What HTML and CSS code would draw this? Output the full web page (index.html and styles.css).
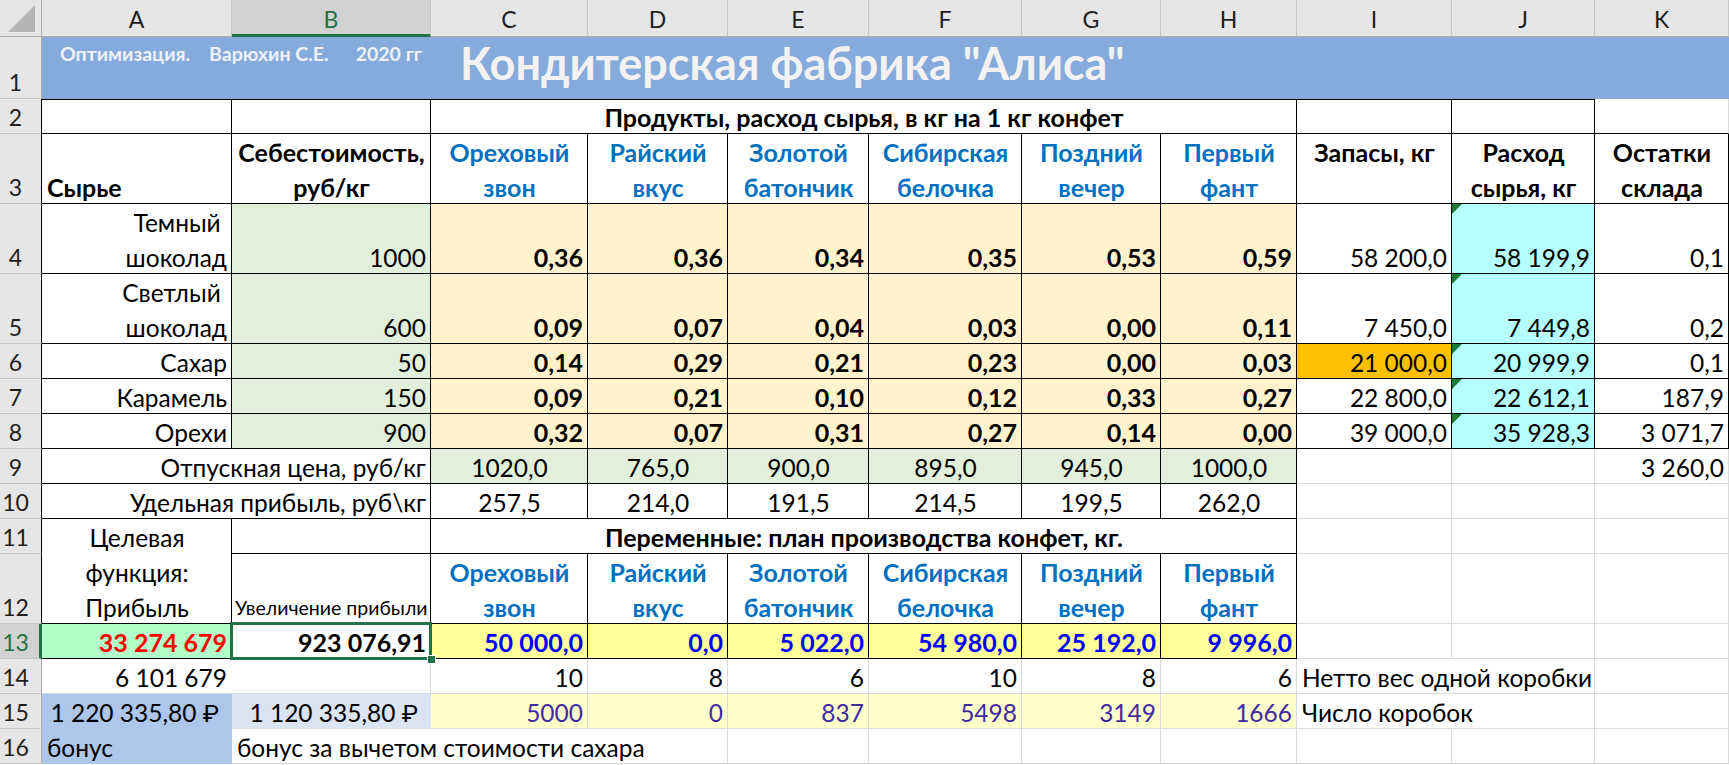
FILE: index.html
```html
<!DOCTYPE html>
<html lang="ru">
<head>
<meta charset="utf-8">
<title>Кондитерская фабрика "Алиса"</title>
<link rel="stylesheet" href="styles.css">
</head>
<body>
<div class="sheet">
  <!-- column headers -->
  <div class="corner"><svg width="28" height="28" viewBox="0 0 28 28"><polygon points="27,0 27,27 0,27" fill="#b4b4b4"/></svg></div>
  <div class="ch">A</div>
  <div class="ch sel">B</div>
  <div class="ch">C</div>
  <div class="ch">D</div>
  <div class="ch">E</div>
  <div class="ch">F</div>
  <div class="ch">G</div>
  <div class="ch">H</div>
  <div class="ch">I</div>
  <div class="ch">J</div>
  <div class="ch">K</div>

  <!-- row 1 -->
  <div class="rh">1</div>
  <div class="band">
    <div class="sub"><span>Оптимизация.</span><span class="gap1">Варюхин С.Е.</span><span class="gap2">2020 гг</span></div>
    <div class="title">Кондитерская фабрика "Алиса"</div>
  </div>

  <!-- row 2 -->
  <div class="rh k">2</div>
  <div class="c kt kb kr"></div>
  <div class="c kt kb kr"></div>
  <div class="c kt kb kr b ctr s6">Продукты, расход сырья, в кг на 1 кг конфет</div>
  <div class="c kt kb kr"></div>
  <div class="c kt kb kr"></div>
  <div class="c kb"></div>

  <!-- row 3 -->
  <div class="rh k">3</div>
  <div class="c kb kr b">Сырье</div>
  <div class="c kb kr b ctr"><div class="t">Себестоимость,<br>руб/кг</div></div>
  <div class="c kb kr b ctr blue"><div class="t">Ореховый<br>звон</div></div>
  <div class="c kb kr b ctr blue"><div class="t">Райский<br>вкус</div></div>
  <div class="c kb kr b ctr blue"><div class="t">Золотой<br>батончик</div></div>
  <div class="c kb kr b ctr blue"><div class="t">Сибирская<br>белочка</div></div>
  <div class="c kb kr b ctr blue"><div class="t">Поздний<br>вечер</div></div>
  <div class="c kb kr b ctr blue"><div class="t">Первый<br>фант</div></div>
  <div class="c kb kr b ctr"><div class="t">Запасы, кг<br>&nbsp;</div></div>
  <div class="c kb kr b ctr"><div class="t">Расход<br>сырья, кг</div></div>
  <div class="c kb kr b ctr"><div class="t">Остатки<br>склада</div></div>

  <!-- row 4 -->
  <div class="rh k">4</div>
  <div class="c kb kr r"><div class="t">Темный&nbsp;<br>шоколад</div></div>
  <div class="c kb kr r green">1000</div>
  <div class="c kb kr r b cream">0,36</div>
  <div class="c kb kr r b cream">0,36</div>
  <div class="c kb kr r b cream">0,34</div>
  <div class="c kb kr r b cream">0,35</div>
  <div class="c kb kr r b cream">0,53</div>
  <div class="c kb kr r b cream">0,59</div>
  <div class="c kb kr r">58 200,0</div>
  <div class="c kb kr r cyan tri">58 199,9</div>
  <div class="c kb kr r">0,1</div>

  <!-- row 5 -->
  <div class="rh k">5</div>
  <div class="c kb kr r"><div class="t">Светлый&nbsp;<br>шоколад</div></div>
  <div class="c kb kr r green">600</div>
  <div class="c kb kr r b cream">0,09</div>
  <div class="c kb kr r b cream">0,07</div>
  <div class="c kb kr r b cream">0,04</div>
  <div class="c kb kr r b cream">0,03</div>
  <div class="c kb kr r b cream">0,00</div>
  <div class="c kb kr r b cream">0,11</div>
  <div class="c kb kr r">7 450,0</div>
  <div class="c kb kr r cyan tri">7 449,8</div>
  <div class="c kb kr r">0,2</div>

  <!-- row 6 -->
  <div class="rh k">6</div>
  <div class="c kb kr r">Сахар</div>
  <div class="c kb kr r green">50</div>
  <div class="c kb kr r b cream">0,14</div>
  <div class="c kb kr r b cream">0,29</div>
  <div class="c kb kr r b cream">0,21</div>
  <div class="c kb kr r b cream">0,23</div>
  <div class="c kb kr r b cream">0,00</div>
  <div class="c kb kr r b cream">0,03</div>
  <div class="c kb kr r orange">21 000,0</div>
  <div class="c kb kr r cyan tri">20 999,9</div>
  <div class="c kb kr r">0,1</div>

  <!-- row 7 -->
  <div class="rh k">7</div>
  <div class="c kb kr r">Карамель</div>
  <div class="c kb kr r green">150</div>
  <div class="c kb kr r b cream">0,09</div>
  <div class="c kb kr r b cream">0,21</div>
  <div class="c kb kr r b cream">0,10</div>
  <div class="c kb kr r b cream">0,12</div>
  <div class="c kb kr r b cream">0,33</div>
  <div class="c kb kr r b cream">0,27</div>
  <div class="c kb kr r">22 800,0</div>
  <div class="c kb kr r cyan tri">22 612,1</div>
  <div class="c kb kr r">187,9</div>

  <!-- row 8 -->
  <div class="rh k">8</div>
  <div class="c kb kr r">Орехи</div>
  <div class="c kb kr r green">900</div>
  <div class="c kb kr r b cream">0,32</div>
  <div class="c kb kr r b cream">0,07</div>
  <div class="c kb kr r b cream">0,31</div>
  <div class="c kb kr r b cream">0,27</div>
  <div class="c kb kr r b cream">0,14</div>
  <div class="c kb kr r b cream">0,00</div>
  <div class="c kb kr r">39 000,0</div>
  <div class="c kb kr r cyan tri">35 928,3</div>
  <div class="c kb kr r">3 071,7</div>

  <!-- row 9 -->
  <div class="rh k">9</div>
  <div class="c kb kr r s2">Отпускная цена, руб/кг</div>
  <div class="c kb kr ctr green">1020,0</div>
  <div class="c kb kr ctr green">765,0</div>
  <div class="c kb kr ctr green">900,0</div>
  <div class="c kb kr ctr green">895,0</div>
  <div class="c kb kr ctr green">945,0</div>
  <div class="c kb kr ctr green">1000,0</div>
  <div class="c"></div>
  <div class="c"></div>
  <div class="c r">3 260,0</div>

  <!-- row 10 -->
  <div class="rh k">10</div>
  <div class="c kb kr r s2">Удельная прибыль, руб\кг</div>
  <div class="c kb kr ctr">257,5</div>
  <div class="c kb kr ctr">214,0</div>
  <div class="c kb kr ctr">191,5</div>
  <div class="c kb kr ctr">214,5</div>
  <div class="c kb kr ctr">199,5</div>
  <div class="c kb kr ctr">262,0</div>
  <div class="c"></div>
  <div class="c"></div>
  <div class="c"></div>

  <!-- row 11 -->
  <div class="rh k">11</div>
  <div class="c kb kr ctr rs2"><div class="t">Целевая<br>функция:<br>Прибыль</div></div>
  <div class="c kb kr"></div>
  <div class="c kb kr b ctr s6">Переменные: план производства конфет, кг.</div>
  <div class="c"></div>
  <div class="c"></div>
  <div class="c"></div>

  <!-- row 12 -->
  <div class="rh k">12</div>
  <div class="c kb kr small">Увеличение прибыли</div>
  <div class="c kb kr b ctr blue"><div class="t">Ореховый<br>звон</div></div>
  <div class="c kb kr b ctr blue"><div class="t">Райский<br>вкус</div></div>
  <div class="c kb kr b ctr blue"><div class="t">Золотой<br>батончик</div></div>
  <div class="c kb kr b ctr blue"><div class="t">Сибирская<br>белочка</div></div>
  <div class="c kb kr b ctr blue"><div class="t">Поздний<br>вечер</div></div>
  <div class="c kb kr b ctr blue"><div class="t">Первый<br>фант</div></div>
  <div class="c"></div>
  <div class="c"></div>
  <div class="c"></div>

  <!-- row 13 -->
  <div class="rh sel">13</div>
  <div class="c kb kr r b red mint">33 274 679</div>
  <div class="c kb kr r b active">923 076,91</div>
  <div class="c kb kr r b navy yellow">50 000,0</div>
  <div class="c kb kr r b navy yellow">0,0</div>
  <div class="c kb kr r b navy yellow">5 022,0</div>
  <div class="c kb kr r b navy yellow">54 980,0</div>
  <div class="c kb kr r b navy yellow">25 192,0</div>
  <div class="c kb kr r b navy yellow">9 996,0</div>
  <div class="c"></div>
  <div class="c"></div>
  <div class="c"></div>

  <!-- row 14 -->
  <div class="rh">14</div>
  <div class="c r nor">6 101 679</div>
  <div class="c"></div>
  <div class="c r">10</div>
  <div class="c r">8</div>
  <div class="c r">6</div>
  <div class="c r">10</div>
  <div class="c r">8</div>
  <div class="c r">6</div>
  <div class="c nor">Нетто вес одной коробки</div>
  <div class="c"></div>
  <div class="c"></div>

  <!-- row 15 -->
  <div class="rh">15</div>
  <div class="c r acc bluea">1 220 335,80 ₽</div>
  <div class="c r acc blueb">1 120 335,80 ₽</div>
  <div class="c r violet lyellow">5000</div>
  <div class="c r violet lyellow">0</div>
  <div class="c r violet lyellow">837</div>
  <div class="c r violet lyellow">5498</div>
  <div class="c r violet lyellow">3149</div>
  <div class="c r violet lyellow">1666</div>
  <div class="c nor">Число коробок</div>
  <div class="c"></div>
  <div class="c"></div>

  <!-- row 16 -->
  <div class="rh">16</div>
  <div class="c bluea">бонус</div>
  <div class="c nor">бонус за вычетом стоимости сахара</div>
  <div class="c nor"></div>
  <div class="c"></div>
  <div class="c"></div>
  <div class="c"></div>
  <div class="c"></div>
  <div class="c"></div>
  <div class="c"></div>
  <div class="c"></div>
  <div class="c"></div>
</div>
</body>
</html>
```
FILE: styles.css
```css
:root {
  --grid: #dadada;
  --hdr: #e6e6e6;
  --hdr-sel: #d2d2d2;
  --xl-green: #217346;
}

html, body {
  margin: 0;
  padding: 0;
  background: #ffffff;
  overflow: hidden;
}

body {
  width: 1729px;
  height: 765px;
}

.sheet {
  display: grid;
  grid-template-columns: 42px 190px 199px 157px 140px 141px 153px 139px 136px 155px 143px 134px;
  grid-template-rows: 37px 62px 35px 70px 70px 70px 35px 35px 35px 35px 35px 35px 70px 35px 35px 35px 35px;
  font-family: Lato, Roboto, "DejaVu Sans", sans-serif;
  font-size: 24.5px;
  color: #000;
}

.sheet > div {
  box-sizing: border-box;
  min-width: 0;
}

/* headers */
.corner {
  background: var(--hdr);
  border-right: 1px solid #ababab;
  border-bottom: 1px solid #ababab;
  display: flex;
  align-items: flex-end;
  justify-content: flex-end;
  padding: 0 5px 3px 0;
}

.ch {
  background: var(--hdr);
  border-right: 1px solid #c6c6c6;
  border-bottom: 1px solid #ababab;
  display: flex;
  align-items: center;
  justify-content: center;
  font-size: 23px;
  color: #1e1e1e;
  padding-top: 2px;
}

.ch.sel {
  background: var(--hdr-sel);
  color: var(--xl-green);
  border-bottom: 3px solid var(--xl-green);
  padding-top: 4px;
}

.rh {
  background: var(--hdr);
  border-right: 1px solid #ababab;
  border-bottom: 1px solid #c6c6c6;
  display: flex;
  align-items: flex-end;
  justify-content: center;
  padding-right: 10px;
  line-height: 31px;
  font-size: 23px;
  color: #1e1e1e;
}

.rh.k { border-right-color: #000; }

.rh.sel {
  background: var(--hdr-sel);
  color: var(--xl-green);
  border-right: 3px solid var(--xl-green);
  padding-right: 8px;
}

/* title band */
.band {
  grid-column: span 11;
  background: #84abdc;
  display: flex;
  padding-left: 18px;
}

.sub {
  flex: none;
  width: 400px;
  padding-top: 6px;
  font-size: 19.5px;
  line-height: 22px;
  font-weight: 700;
  color: #eef2f8;
  white-space: nowrap;
}

.sub .gap1 { margin-left: 19px; }
.sub .gap2 { margin-left: 27px; }

.title {
  align-self: flex-end;
  padding-bottom: 13px;
  font-size: 45px;
  line-height: 45px;
  font-weight: 700;
  color: #f2f2f2;
  white-space: nowrap;
}

/* cells */
.c {
  display: flex;
  align-items: flex-end;
  border-right: 1px solid var(--grid);
  border-bottom: 1px solid var(--grid);
  padding: 0 4px 0 5px;
  line-height: 31px;
  white-space: nowrap;
}

.c .t {
  line-height: 35px;
  margin-bottom: -2px;
}

.kr { border-right-color: #000; }
.kb { border-bottom-color: #000; }
.kt { border-top: 1px solid #000; }
.nor { border-right-color: transparent; }

.r { justify-content: flex-end; text-align: right; }
.ctr { justify-content: center; text-align: center; }
.b { font-weight: 700; font-size: 25px; }

.s2 { grid-column: span 2; }
.s6 { grid-column: span 6; }
.rs2 { grid-row: span 2; }

.small { font-size: 19.5px; padding-left: 3px; }
.acc { padding-right: 12px; }

/* fills and colours */
.blue { color: #0070c0; }
.red { color: #ff0000; }
.navy { color: #0000ff; }
.violet { color: #3f2aa2; }

.green { background: #e2efda; }
.cream { background: #fff2cc; }
.cyan { background: #b5ffff; }
.orange { background: #ffc000; }
.mint { background: #b3ffc9; }
.yellow { background: #ffff99; }
.lyellow { background: #ffffcc; }
.bluea { background: #aec6e9; border-right-color: #aec6e9; border-bottom-color: #aec6e9; }
.blueb { background: #dae4f3; border-right-color: #dae4f3; }

/* error indicator triangle */
.tri { position: relative; }
.tri::before {
  content: "";
  position: absolute;
  left: 0;
  top: 0;
  border-top: 10px solid #1c7b36;
  border-right: 10px solid transparent;
}

/* active cell */
.active {
  position: relative;
  z-index: 1;
}
.active::after {
  content: "";
  position: absolute;
  left: -2px;
  top: -2px;
  right: -2px;
  bottom: -2px;
  border: 3px solid var(--xl-green);
}
.active::before {
  content: "";
  position: absolute;
  right: -6px;
  bottom: -6px;
  width: 7px;
  height: 7px;
  background: var(--xl-green);
  border: 1px solid #ffffff;
  z-index: 2;
}
```
